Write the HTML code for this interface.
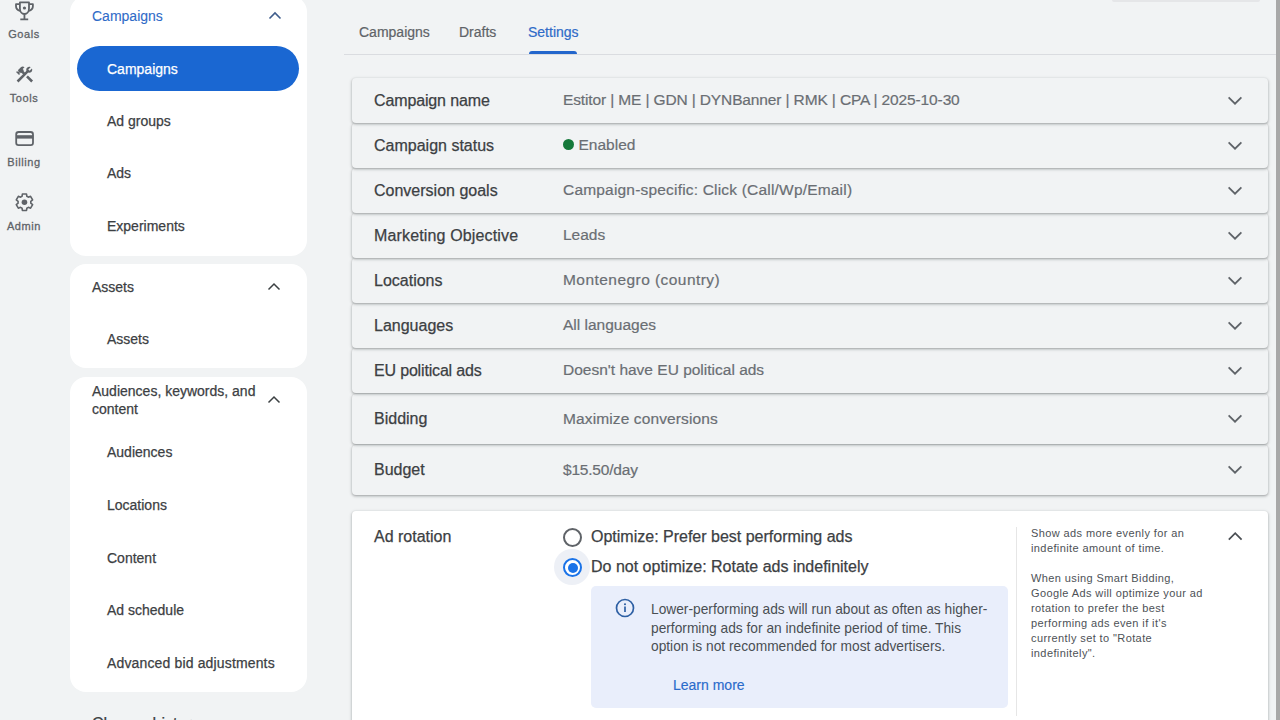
<!DOCTYPE html>
<html><head><meta charset="utf-8">
<style>
*{box-sizing:border-box;margin:0;padding:0}
html,body{width:1280px;height:720px;overflow:hidden;background:#f1f3f4;font-family:"Liberation Sans",sans-serif;color:#3c4043}
.a{position:absolute;white-space:nowrap}
.rail{position:absolute;left:0;top:0;width:60px;height:720px;background:#f1f3f4}
.rl{position:absolute;left:0;width:48px;text-align:center;font-size:11px;color:#5f6368;letter-spacing:0.6px;-webkit-text-stroke:0.3px #5f6368}
.card{position:absolute;left:70px;width:237px;background:#fff;border-radius:16px}
.si{position:absolute;left:107px;font-size:14px;color:#3c4043;white-space:nowrap}
.sh{position:absolute;left:92px;font-size:14px;color:#3c4043;white-space:nowrap}
.chev{position:absolute}
.row{position:absolute;left:352px;width:916px;background:#f1f3f4;border-radius:4px;box-shadow:0 1px 2px rgba(60,64,67,.3),0 1px 3px 1px rgba(60,64,67,.15)}
.lbl{position:absolute;left:22px;font-size:16px;color:#3c4043;white-space:nowrap}
.val{position:absolute;left:211px;font-size:15.5px;color:#6a6e73;white-space:nowrap}
.rch{position:absolute;left:876px}
.si,.sh,.lbl{-webkit-text-stroke:0.25px currentColor}
.val{-webkit-text-stroke:0.2px currentColor}
</style></head><body>
<div class="rail">
  <svg class="a" style="left:0;top:0" width="60" height="240" viewBox="0 0 60 240">
    <g fill="none" stroke="#5f6368" stroke-width="1.8" stroke-linejoin="round">
      <path d="M19.9 2.4H29V8.6C29 11.6 27 14 24.45 14C21.9 14 19.9 11.6 19.9 8.6Z"/>
      <path d="M19.9 4.2H16V6.3C16 8.3 17.6 10.2 20.2 11"/>
      <path d="M29 4.2H32.9V6.3C32.9 8.3 31.3 10.2 28.7 11"/>
      <path d="M24.45 14V19.3M20.3 19.4H28.2"/>
      <rect x="16.2" y="132" width="16.8" height="13.2" rx="2.4"/>
      <path d="M21.25 196.71 L22.05 196.32 L22.39 194.00 L26.51 194.00 L26.85 196.32 L27.65 196.71 L28.39 197.21 L30.56 196.35 L32.62 199.91 L30.79 201.36 L30.85 202.25 L30.79 203.14 L32.62 204.59 L30.56 208.15 L28.39 207.29 L27.65 207.79 L26.85 208.18 L26.51 210.50 L22.39 210.50 L22.05 208.18 L21.25 207.79 L20.51 207.29 L18.34 208.15 L16.28 204.59 L18.11 203.14 L18.05 202.25 L18.11 201.36 L16.28 199.91 L18.34 196.35 L20.51 197.21Z" stroke-width="1.6"/>
    </g>
    <circle cx="24.45" cy="8" r="1.6" fill="#5f6368"/>
    <rect x="16" y="135.2" width="17.2" height="3.4" fill="#5f6368"/>
    <circle cx="24.45" cy="202.25" r="2.8" fill="#5f6368"/>
    <g transform="translate(14.2 64.2) scale(0.86)">
      <path fill="#5f6368" d="M13.783 15.172l2.121-2.121 5.996 5.996-2.121 2.121zM17.5 10c1.93 0 3.5-1.57 3.5-3.5 0-.58-.16-1.12-.41-1.6l-2.7 2.7-1.490-1.49 2.7-2.7c-.48-.25-1.020-.41-1.6-.41C15.57 3 14 4.57 14 6.5c0 .41.08.8.21 1.16l-1.85 1.85-1.78-1.78.71-.71-1.41-1.41L12 3.49c-1.17-1.17-3.07-1.17-4.240 0L4.220 7.030l1.41 1.41H2.810l-.71.71 3.54 3.54.71-.71V9.150l1.41 1.41.71-.71 1.78 1.78-7.41 7.41 2.12 2.12L16.34 9.790c.36.13.75.21 1.16.21z"/>
    </g>
  </svg>
  <div class="rl" style="top:28px">Goals</div>
  <div class="rl" style="top:92px">Tools</div>
  <div class="rl" style="top:156px">Billing</div>
  <div class="rl" style="top:220px">Admin</div>
</div>

<!-- Sidebar card 1 -->
<div class="card" style="top:-4px;height:260px"></div>
<div class="sh" style="top:8px;color:#2f6bc8;-webkit-text-stroke:0.1px #2f6bc8">Campaigns</div>
<svg class="chev" style="left:267.5px;top:10px" width="14" height="10" viewBox="0 0 14 10"><path d="M1.5 8.5L7 3l5.5 5.5" fill="none" stroke="#3f5d8c" stroke-width="1.6"/></svg>
<div class="a" style="left:77px;top:46px;width:222px;height:45px;border-radius:23px;background:#1a67d2"></div>
<div class="si" style="top:60.5px;color:#fff">Campaigns</div>
<div class="si" style="top:113px">Ad groups</div>
<div class="si" style="top:165px">Ads</div>
<div class="si" style="top:218px">Experiments</div>

<!-- card 2 -->
<div class="card" style="top:264px;height:104px"></div>
<div class="sh" style="top:279px">Assets</div>
<svg class="chev" style="left:267px;top:281px" width="14" height="10" viewBox="0 0 14 10"><path d="M1.5 8.5L7 3l5.5 5.5" fill="none" stroke="#3c4043" stroke-width="1.5"/></svg>
<div class="si" style="top:331px">Assets</div>

<!-- card 3 -->
<div class="card" style="top:377px;height:315px"></div>
<div class="sh" style="top:381.5px;line-height:18.5px;white-space:normal;width:175px">Audiences, keywords, and content</div>
<svg class="chev" style="left:267px;top:394px" width="14" height="10" viewBox="0 0 14 10"><path d="M1.5 8.5L7 3l5.5 5.5" fill="none" stroke="#3c4043" stroke-width="1.5"/></svg>
<div class="si" style="top:444px">Audiences</div>
<div class="si" style="top:497px">Locations</div>
<div class="si" style="top:549.5px">Content</div>
<div class="si" style="top:602px">Ad schedule</div>
<div class="si" style="top:655px;letter-spacing:0.15px">Advanced bid adjustments</div>
<div class="sh" style="top:715px;font-size:16px">Change history</div>

<!-- tabs -->
<div class="a" style="left:359px;top:24px;font-size:14px;color:#5f6368;-webkit-text-stroke:0.2px #5f6368">Campaigns</div>
<div class="a" style="left:459px;top:24px;font-size:14px;color:#5f6368;-webkit-text-stroke:0.2px #5f6368">Drafts</div>
<div class="a" style="left:528px;top:24px;font-size:14px;color:#2f6bc8;-webkit-text-stroke:0.2px #2f6bc8">Settings</div>
<div class="a" style="left:529px;top:51px;width:48px;height:3px;background:#2366cc;border-radius:3px 3px 0 0"></div>
<div class="a" style="left:344px;top:54px;width:932px;height:1px;background:#dadce0"></div>
<div class="a" style="left:1112px;top:0px;width:148px;height:2px;background:#e5e6e8;border-radius:0 0 3px 3px"></div>

<!-- rows -->
<div class="row" style="z-index:19;top:78px;height:45px"><svg class="rch" style="top:18px" width="14" height="9" viewBox="0 0 14 9"><path d="M0.6 1.3l6.4 6.4 6.4-6.4" fill="none" stroke="#5f6368" stroke-width="1.8"/></svg><div class="lbl" style="top:14px;letter-spacing:-0.13px">Campaign name</div><div class="val" style="top:13px;letter-spacing:-0.13px">Estitor | ME | GDN | DYNBanner | RMK | CPA | 2025-10-30</div></div>
<div class="row" style="z-index:18;top:123px;height:45px"><svg class="rch" style="top:18px" width="14" height="9" viewBox="0 0 14 9"><path d="M0.6 1.3l6.4 6.4 6.4-6.4" fill="none" stroke="#5f6368" stroke-width="1.8"/></svg><div class="lbl" style="top:14px">Campaign status</div><div class="val" style="top:13px"><span style="display:inline-block;width:11px;height:11px;border-radius:50%;background:#15793a;margin-right:4.5px;vertical-align:0px"></span>Enabled</div></div>
<div class="row" style="z-index:17;top:168px;height:45px"><svg class="rch" style="top:18px" width="14" height="9" viewBox="0 0 14 9"><path d="M0.6 1.3l6.4 6.4 6.4-6.4" fill="none" stroke="#5f6368" stroke-width="1.8"/></svg><div class="lbl" style="top:14px">Conversion goals</div><div class="val" style="top:13px;letter-spacing:0.19px">Campaign-specific: Click (Call/Wp/Email)</div></div>
<div class="row" style="z-index:16;top:213px;height:45px"><svg class="rch" style="top:18px" width="14" height="9" viewBox="0 0 14 9"><path d="M0.6 1.3l6.4 6.4 6.4-6.4" fill="none" stroke="#5f6368" stroke-width="1.8"/></svg><div class="lbl" style="top:14px;letter-spacing:0.15px">Marketing Objective</div><div class="val" style="top:13px">Leads</div></div>
<div class="row" style="z-index:15;top:258px;height:45px"><svg class="rch" style="top:18px" width="14" height="9" viewBox="0 0 14 9"><path d="M0.6 1.3l6.4 6.4 6.4-6.4" fill="none" stroke="#5f6368" stroke-width="1.8"/></svg><div class="lbl" style="top:14px">Locations</div><div class="val" style="top:13px;letter-spacing:0.45px">Montenegro (country)</div></div>
<div class="row" style="z-index:14;top:303px;height:45px"><svg class="rch" style="top:18px" width="14" height="9" viewBox="0 0 14 9"><path d="M0.6 1.3l6.4 6.4 6.4-6.4" fill="none" stroke="#5f6368" stroke-width="1.8"/></svg><div class="lbl" style="top:14px">Languages</div><div class="val" style="top:13px">All languages</div></div>
<div class="row" style="z-index:13;top:348px;height:45px"><svg class="rch" style="top:18px" width="14" height="9" viewBox="0 0 14 9"><path d="M0.6 1.3l6.4 6.4 6.4-6.4" fill="none" stroke="#5f6368" stroke-width="1.8"/></svg><div class="lbl" style="top:14px;letter-spacing:-0.17px">EU political ads</div><div class="val" style="top:13px">Doesn't have EU political ads</div></div>
<div class="row" style="z-index:12;top:394px;height:50px"><svg class="rch" style="top:20px" width="14" height="9" viewBox="0 0 14 9"><path d="M0.6 1.3l6.4 6.4 6.4-6.4" fill="none" stroke="#5f6368" stroke-width="1.8"/></svg><div class="lbl" style="top:16px">Bidding</div><div class="val" style="top:16px;letter-spacing:0.12px">Maximize conversions</div></div>
<div class="row" style="z-index:11;top:445px;height:50px"><svg class="rch" style="top:20px" width="14" height="9" viewBox="0 0 14 9"><path d="M0.6 1.3l6.4 6.4 6.4-6.4" fill="none" stroke="#5f6368" stroke-width="1.8"/></svg><div class="lbl" style="top:16px">Budget</div><div class="val" style="top:16px;letter-spacing:-0.2px">$15.50/day</div></div>

<!-- ad rotation -->
<div class="a" style="left:352px;top:511px;width:916px;height:240px;background:#fff;border-radius:4px;box-shadow:0 1px 2px rgba(60,64,67,.3),0 1px 3px 1px rgba(60,64,67,.15)"></div>
<div class="a" style="left:374px;top:528px;font-size:16px;color:#3c4043;-webkit-text-stroke:0.25px #3c4043">Ad rotation</div>
<div class="a" style="left:562.5px;top:528px;width:19px;height:19px;border:2px solid #5f6368;border-radius:50%"></div>
<div class="a" style="left:591px;top:528px;font-size:16px;color:#3c4043;-webkit-text-stroke:0.25px #3c4043">Optimize: Prefer best performing ads</div>
<div class="a" style="left:554px;top:549px;width:36px;height:36px;border-radius:50%;background:#edf0f6"></div>
<div class="a" style="left:563px;top:558px;width:19px;height:19px;border:2px solid #1a73e8;border-radius:50%;background:#fff"></div>
<div class="a" style="left:567.5px;top:562.5px;width:10px;height:10px;border-radius:50%;background:#1a73e8"></div>
<div class="a" style="left:591px;top:558px;font-size:16px;color:#3c4043;-webkit-text-stroke:0.25px #3c4043">Do not optimize: Rotate ads indefinitely</div>
<div class="a" style="left:591px;top:586px;width:417px;height:122px;background:#e9eefb;border-radius:5px"></div>
<svg class="a" style="left:614.7px;top:598.3px" width="20" height="20" viewBox="0 0 20 20"><circle cx="10" cy="10" r="8.5" fill="none" stroke="#2d5fa3" stroke-width="1.7"/><circle cx="10" cy="6.2" r="1.05" fill="#2d5fa3"/><path d="M10 8.6v5.4" stroke="#2d5fa3" stroke-width="1.7"/></svg>
<div class="a" style="left:651px;top:601px;font-size:13.75px;line-height:18.5px;color:#4a4e53">Lower-performing ads will run about as often as higher-<br>performing ads for an indefinite period of time. This<br>option is not recommended for most advertisers.</div>
<div class="a" style="left:673px;top:677px;font-size:14px;color:#2a6bcb;-webkit-text-stroke:0.15px #2a6bcb">Learn more</div>
<div class="a" style="left:1016px;top:527px;width:1px;height:189px;background:#e6e6e6"></div>
<div class="a" style="left:1031px;top:526px;font-size:11px;line-height:15px;letter-spacing:0.4px;color:#4d5156">Show ads more evenly for an<br>indefinite amount of time.<br><br>When using Smart Bidding,<br>Google Ads will optimize your ad<br>rotation to prefer the best<br>performing ads even if it's<br>currently set to "Rotate<br>indefinitely".</div>
<svg class="chev" style="left:1228px;top:531px" width="15" height="10" viewBox="0 0 15 10"><path d="M0.8 8.6L7.2 2.2l6.4 6.4" fill="none" stroke="#4a4e53" stroke-width="1.7"/></svg>

<!-- scrollbar -->
<div class="a" style="left:1276px;top:0;width:4px;height:720px;background:#a8a8a8"></div>
</body></html>
